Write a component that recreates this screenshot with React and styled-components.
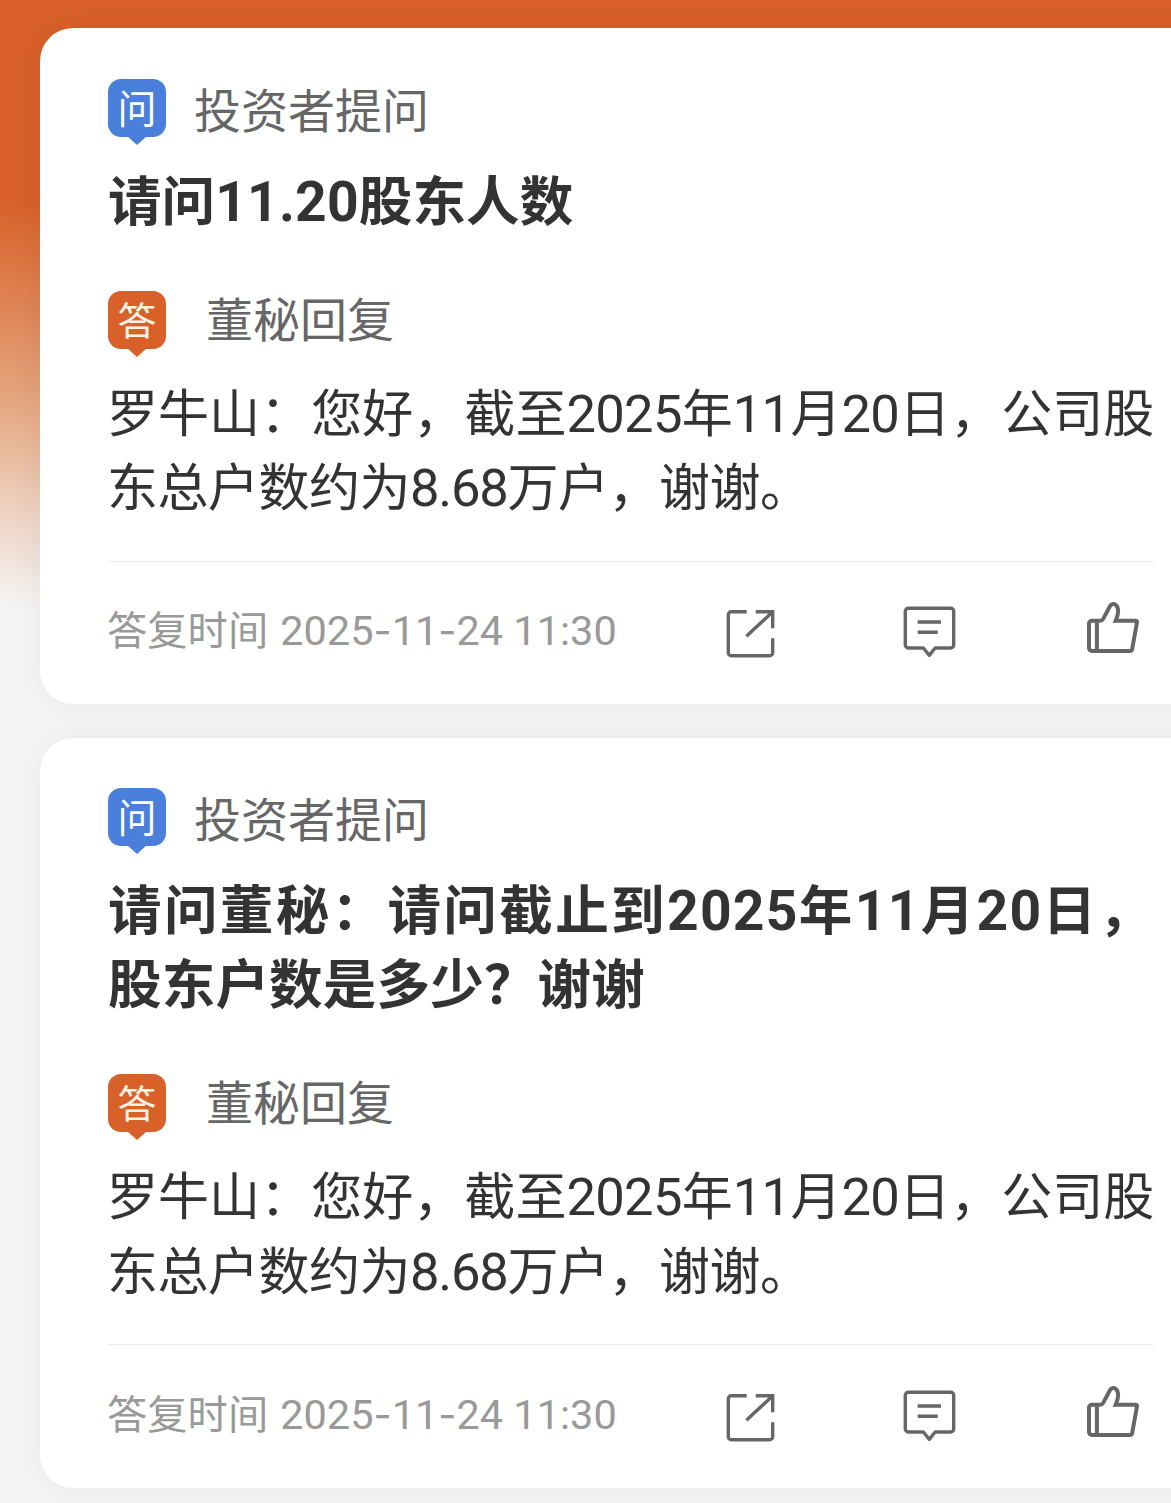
import React from 'react';
import styled, { createGlobalStyle } from 'styled-components';

const GlobalStyle = createGlobalStyle`
  body {
    margin: 0;
    background: #f5f5f5;
    font-family: "Noto Sans CJK SC", "Noto Sans", sans-serif;
  }
`;

const Page = styled.div`
  box-sizing: border-box;
  height: 1503px;
  padding: 28px 0 0 40px;
  overflow: hidden;
  display: flex;
  flex-direction: column;
  gap: 34px;
  background: linear-gradient(#d96029 0, #d96029 200px, #e4a279 390px, #efd8c9 525px, #f5f5f5 610px);
`;

const Card = styled.article`
  box-sizing: border-box;
  flex: none;
  width: 1182px;
  padding: 50.5px 68px 0;
  border-radius: 33px;
  background: #fff;
  box-shadow: 0 0 36px rgba(0, 0, 0, 0.06);
`;

const Head = styled.div`
  display: flex;
  align-items: flex-start;
  height: 66px;
  gap: ${props => props.$gap}px;
  margin-top: ${props => props.$top || 0}px;
`;

const Badge = styled.div`
  position: relative;
  width: 58px;
  height: 58px;
  border-radius: 13px;
  background: ${props => props.$color};
  color: ${props => props.$ink};
  font-size: 39px;
  font-weight: 400;
  line-height: 54px;
  text-align: center;

  &::after {
    content: '';
    position: absolute;
    left: 19px;
    top: 57px;
    border: 10px solid transparent;
    border-top: 9px solid ${props => props.$color};
    border-bottom: 0;
  }
`;

const Label = styled.span`
  font-size: 47px;
  line-height: ${props => props.$line}px;
  color: #666;
`;

const Title = styled.h2`
  margin: 16px 0 0;
  font-size: 53.6px;
  font-weight: 700;
  line-height: 74px;
  color: #333;
`;

const Answer = styled.p`
  margin: 16px 0 0 -1px;
  font-size: 51px;
  line-height: 74.5px;
  color: #333;
`;

const Line = styled.span`
  display: block;
  white-space: nowrap;
  letter-spacing: ${props => props.$track || 0}px;
`;

const Num = styled.span`
  font-family: Roboto, sans-serif;
  font-size: 1.03em;
  line-height: 1;
  letter-spacing: ${props => props.$track || 0}px;
`;

const Dash = styled.span`
  font-family: Inter, sans-serif;
  font-size: 0.95em;
`;

const Footer = styled.footer`
  display: flex;
  align-items: flex-start;
  justify-content: space-between;
  box-sizing: border-box;
  height: 143.3px;
  margin-top: 39px;
  padding: 38.3px 11px 0 0;
  border-top: 1px solid #ebebeb;
`;

const Time = styled.span`
  display: flex;
  align-items: baseline;
  gap: 12px;
  margin-left: -1px;
  font-size: 40.3px;
  line-height: 56px;
  color: #999;
`;

const Actions = styled.div`
  display: flex;
  justify-content: space-between;
  width: 422px;
`;

const Icon = styled.svg`
  width: 60px;
  height: 60px;
  fill: none;
  stroke: #666;
  stroke-width: ${props => props.$weight};
  stroke-linejoin: round;
`;

const ShareIcon = () => (
  <Icon viewBox="0 0 60 60" $weight={3.4}>
    <path d="M25.7 11.7H10.3a3 3 0 0 0-3 3v38a3 3 0 0 0 3 3h38.4a3 3 0 0 0 3-3V38.3" />
    <path d="M34.7 11.7h17v16.6M51 12.5 25.4 36.2" strokeLinejoin="miter" />
  </Icon>
);

const CommentIcon = () => (
  <Icon viewBox="0 0 60 60" $weight={3.4}>
    <path d="M6.3 8.3h42.4a3 3 0 0 1 3 3V45a3 3 0 0 1-3 3H33.2l-5.9 7.4-5.9-7.4H6.3a3 3 0 0 1-3-3V11.3a3 3 0 0 1 3-3z" />
    <path d="M15.7 22H39M15.7 32.3h20" />
  </Icon>
);

const LikeIcon = () => (
  <Icon viewBox="0 0 60 60" $weight={4}>
    <path d="M9 20.8h8.2c1.4 0 2.3-.6 3-1.9l6.6-12.4c1.3-2.4 3.6-3.2 5.6-1.9 3.4 2.2 3.8 8.4.2 16.2h20.1c.9 0 1.5.8 1.3 1.7l-4.8 26.3c-.3 1.5-1.2 2.2-2.6 2.2H9c-1.7 0-3-1.3-3-3V23.8c0-1.7 1.3-3 3-3z" strokeLinejoin="miter" />
    <path d="M13.9 20.8V51" />
  </Icon>
);

// digits are set apart from the Chinese text in a narrower face
const withDigits = (text, track) =>
  text.split(/([\d.]+)/).map((part, i) =>
    i % 2 ? <Num key={i} $track={track}>{part}</Num> : part
  );

const posts = [
  {
    id: 1,
    question: [{ text: '请问11.20股东人数', digits: 0.2 }],
  },
  {
    id: 2,
    question: [
      { text: '请问董秘：请问截止到2025年11月20日，', track: 2.3, digits: 1.3 },
      { text: '股东户数是多少？谢谢', track: 0.1 },
    ],
  },
];

const answer = [
  { text: '罗牛山：您好，截至2025年11月20日，公司股', track: 0.05, digits: -0.7 },
  { text: '东总户数约为8.68万户，谢谢。', track: -0.5, digits: -1.2 },
];

const Lines = ({ lines }) =>
  lines.map(line => (
    <Line key={line.text} $track={line.track}>{withDigits(line.text, line.digits)}</Line>
  ));

const Post = ({ question }) => (
  <Card>
    <Head $gap={28}>
      <Badge $color="#4a80dc" $ink="#fff">问</Badge>
      <Label $line={58}>投资者提问</Label>
    </Head>
    <Title>
      <Lines lines={question} />
    </Title>
    <Head $gap={40} $top={56}>
      <Badge $color="#d86029" $ink="#fff3e2">答</Badge>
      <Label $line={51}>董秘回复</Label>
    </Head>
    <Answer>
      <Lines lines={answer} />
    </Answer>
    <Footer>
      <Time>
        <span>答复时间</span>
        <Num>2025<Dash>-</Dash>11<Dash>-</Dash>24 11:30</Num>
      </Time>
      <Actions>
        <ShareIcon />
        <CommentIcon />
        <LikeIcon />
      </Actions>
    </Footer>
  </Card>
);

export default function App() {
  return (
    <Page>
      <GlobalStyle />
      {posts.map(post => (
        <Post key={post.id} question={post.question} />
      ))}
    </Page>
  );
}
